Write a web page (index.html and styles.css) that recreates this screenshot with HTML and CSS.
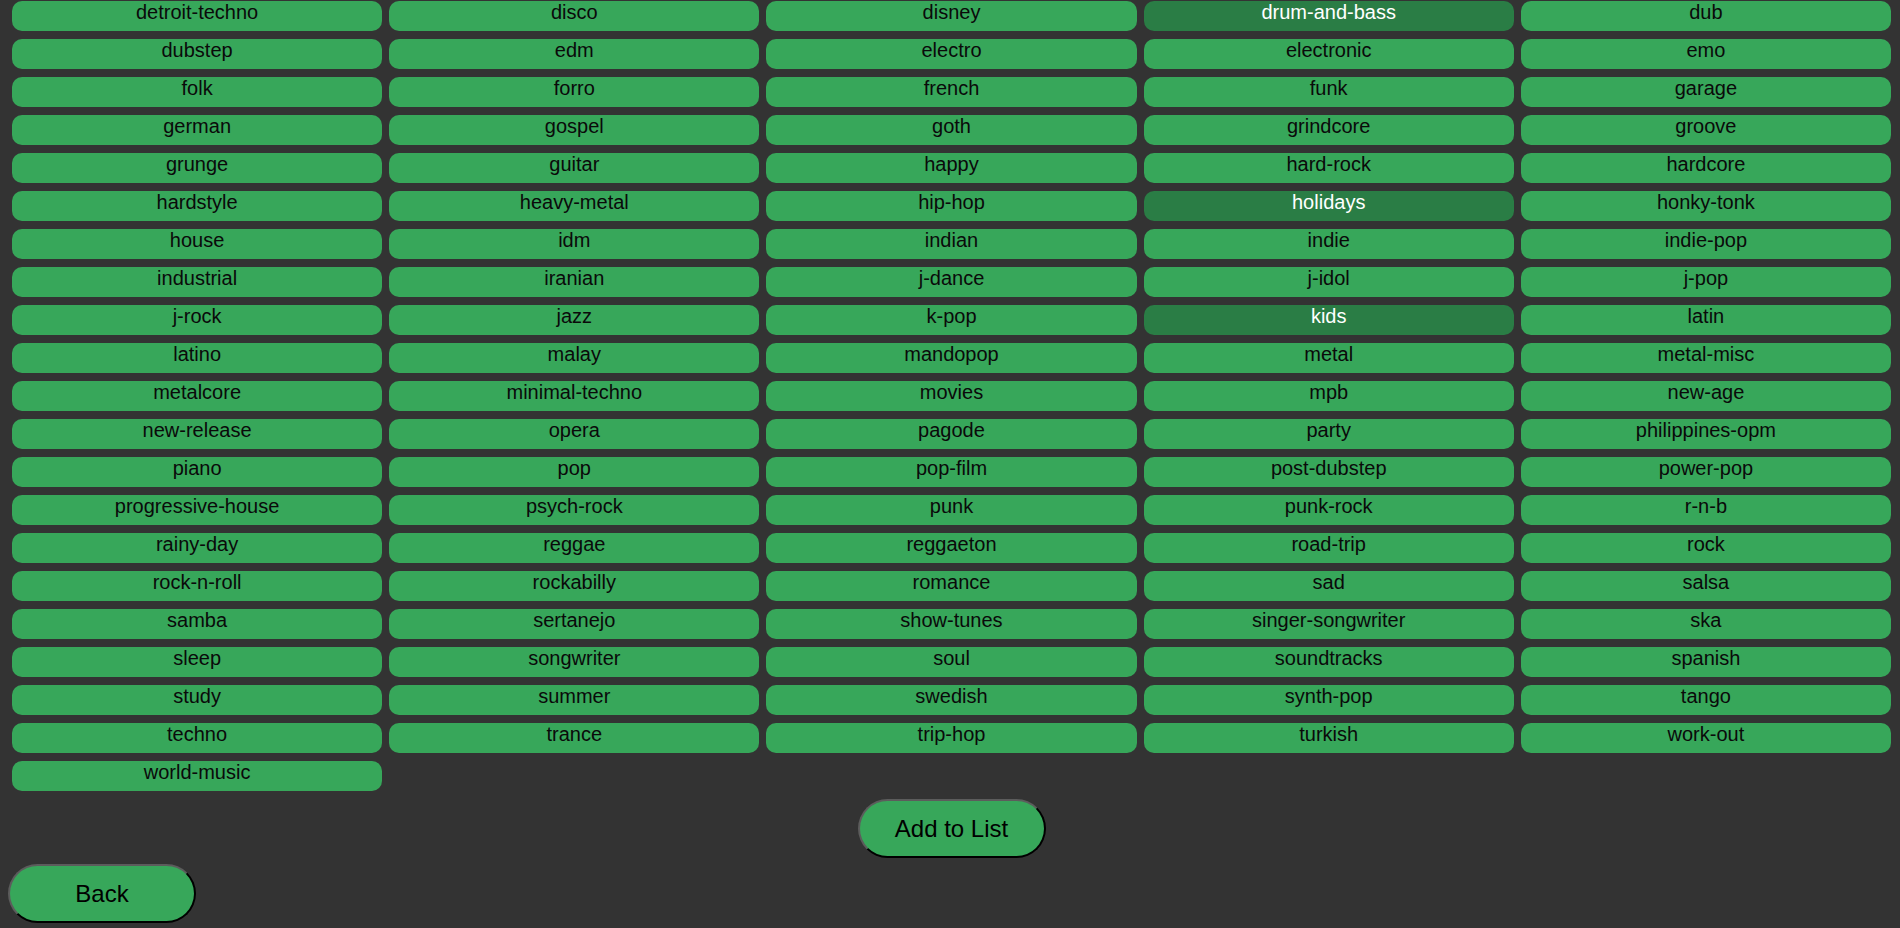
FILE: index.html
```html
<!DOCTYPE html>
<html lang="en">
<head>
<meta charset="utf-8">
<title>Genres</title>
<link rel="stylesheet" href="styles.css">
</head>
<body>
<div class="page">
  <div class="genres" id="genres"></div>
  <div class="actions">
    <button class="pill">Add to List</button>
  </div>
  <div class="back-row">
    <button class="pill">Back</button>
  </div>
</div>
<script>
var genres = ["detroit-techno","disco","disney","drum-and-bass","dub","dubstep","edm","electro","electronic","emo","folk","forro","french","funk","garage","german","gospel","goth","grindcore","groove","grunge","guitar","happy","hard-rock","hardcore","hardstyle","heavy-metal","hip-hop","holidays","honky-tonk","house","idm","indian","indie","indie-pop","industrial","iranian","j-dance","j-idol","j-pop","j-rock","jazz","k-pop","kids","latin","latino","malay","mandopop","metal","metal-misc","metalcore","minimal-techno","movies","mpb","new-age","new-release","opera","pagode","party","philippines-opm","piano","pop","pop-film","post-dubstep","power-pop","progressive-house","psych-rock","punk","punk-rock","r-n-b","rainy-day","reggae","reggaeton","road-trip","rock","rock-n-roll","rockabilly","romance","sad","salsa","samba","sertanejo","show-tunes","singer-songwriter","ska","sleep","songwriter","soul","soundtracks","spanish","study","summer","swedish","synth-pop","tango","techno","trance","trip-hop","turkish","work-out","world-music"];
var selected = {"drum-and-bass":1,"holidays":1,"kids":1};
var box = document.getElementById("genres");
genres.forEach(function (g) {
  var d = document.createElement("div");
  d.className = "tag" + (selected[g] ? " selected" : "");
  d.textContent = g;
  box.appendChild(d);
});
</script>
</body>
</html>
```

FILE: styles.css
```css
html, body {
  margin: 0;
  padding: 0;
  background: #333333;
  overflow: hidden;
}

.page {
  font-family: "Liberation Sans", Arial, sans-serif;
  padding-top: 1px;
}

.genres {
  display: grid;
  grid-template-columns: repeat(5, 1fr);
  column-gap: 7px;
  row-gap: 8px;
  padding: 0 9px 0 12px;
}

.tag {
  height: 30px;
  box-sizing: border-box;
  background: #37a75a;
  color: #0a0a0a;
  border-radius: 10px;
  font-size: 20px;
  line-height: 23px;
  text-align: center;
  white-space: nowrap;
}

.tag.selected {
  background: #2a7d45;
  color: #ffffff;
}

.actions {
  display: flex;
  justify-content: center;
  padding: 0 9px 0 12px;
  margin-top: 8px;
}

.back-row {
  display: flex;
  margin-top: 6px;
  padding-left: 8px;
}

.pill {
  width: 188px;
  height: 59px;
  box-sizing: border-box;
  background: #37a75a;
  color: #000000;
  font-family: "Liberation Sans", Arial, sans-serif;
  font-size: 24px;
  border-radius: 30px;
  border: 2px solid;
  border-color: #5c5c5c #000000 #000000 #5c5c5c;
  padding: 0;
  cursor: pointer;
}
```
